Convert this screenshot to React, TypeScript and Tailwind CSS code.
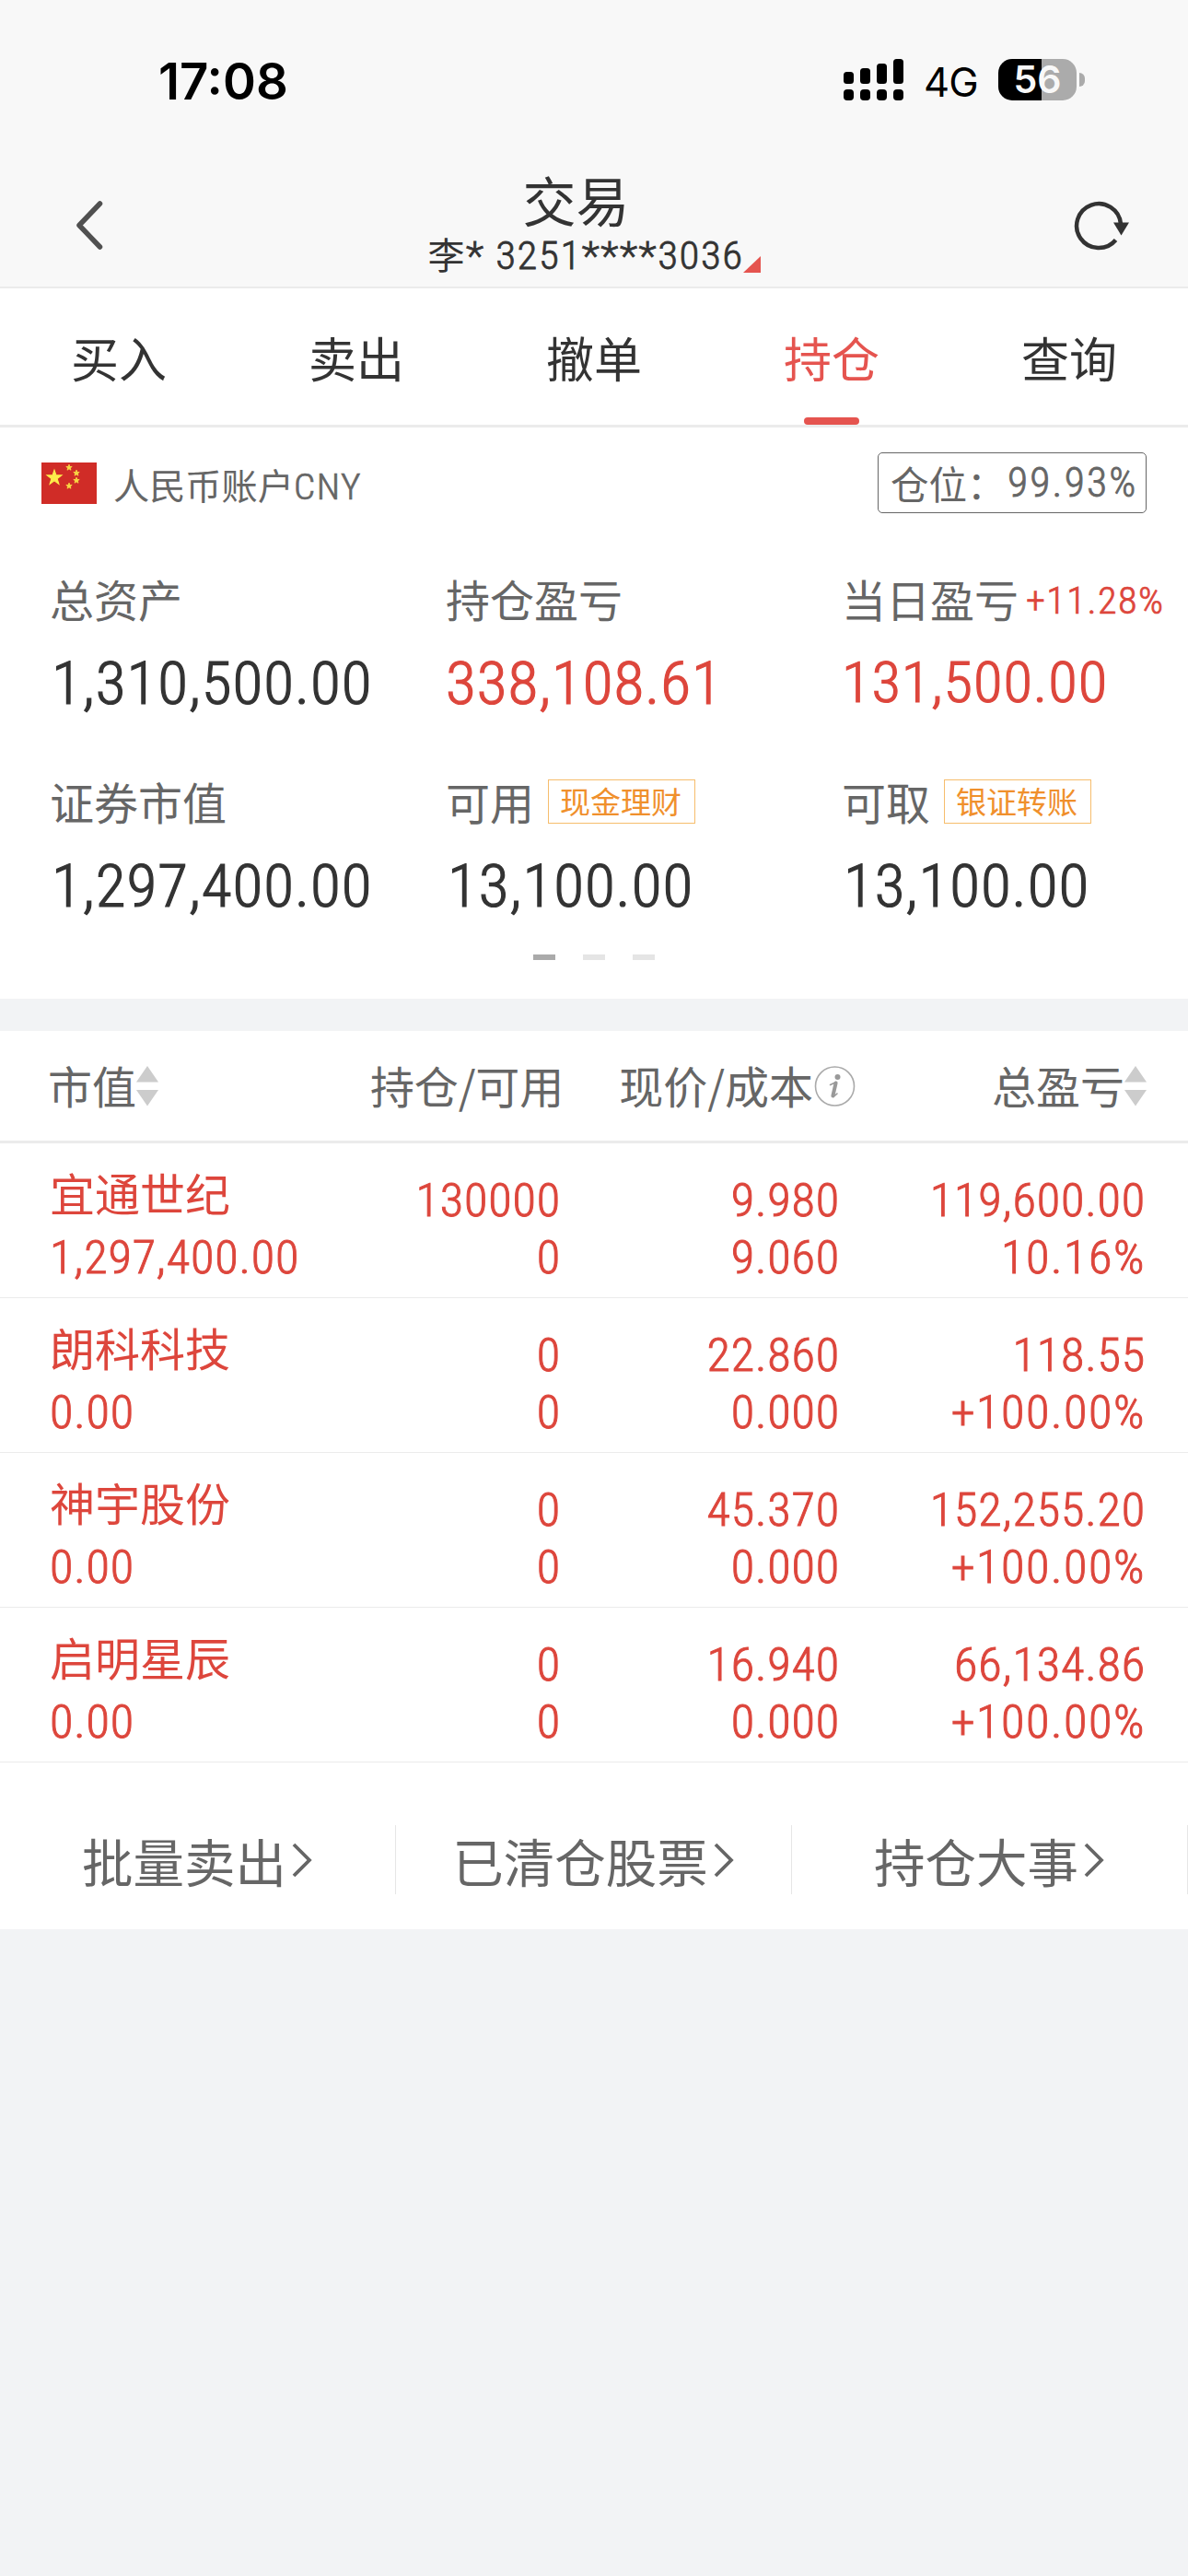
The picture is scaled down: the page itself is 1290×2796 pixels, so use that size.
const CJK = "font-['Noto_Sans_CJK_SC',sans-serif]";
const NUM = "font-['Roboto_Condensed','Noto_Sans_CJK_SC',sans-serif] font-light [-webkit-text-stroke:0.018em] scale-x-[1.045]";

const tabs = ['买入', '卖出', '撤单', '持仓', '查询'];

const holdings = [
  { name: '宜通世纪', value: '1,297,400.00', held: '130000', usable: '0', price: '9.980', cost: '9.060', profit: '119,600.00', rate: '10.16%' },
  { name: '朗科科技', value: '0.00', held: '0', usable: '0', price: '22.860', cost: '0.000', profit: '118.55', rate: '+100.00%' },
  { name: '神宇股份', value: '0.00', held: '0', usable: '0', price: '45.370', cost: '0.000', profit: '152,255.20', rate: '+100.00%' },
  { name: '启明星辰', value: '0.00', held: '0', usable: '0', price: '16.940', cost: '0.000', profit: '66,134.86', rate: '+100.00%' },
];

const actions = ['批量卖出', '已清仓股票', '持仓大事'];

function StatusBar() {
  return (
    <div className="flex h-[173px] items-center pl-[172px] pr-[112px] text-black">
      <span className="mt-[2px] font-['Inter',sans-serif] text-[54.5px] font-semibold leading-[64px]">17:08</span>
      <svg className="ml-auto" width="65" height="45" viewBox="0 0 65 45" fill="#000">
        <rect x="0" y="14" width="11" height="13" rx="3.5" />
        <rect x="18" y="10" width="11" height="17" rx="3.5" />
        <rect x="36" y="5" width="11" height="22" rx="3.5" />
        <rect x="54" y="0" width="11" height="27" rx="3.5" />
        <rect x="0" y="33" width="11" height="12" rx="4" />
        <rect x="18" y="33" width="11" height="12" rx="4" />
        <rect x="36" y="33" width="11" height="12" rx="4" />
        <rect x="54" y="33" width="11" height="12" rx="4" />
      </svg>
      <span className="ml-[22px] mt-1 w-[60px] font-['Inter',sans-serif] text-[43.5px] font-normal leading-[52px] tracking-[-0.02em]">4G</span>
      <div className="ml-[21px] flex h-[45px] w-[85px] items-center justify-center rounded-[15px] bg-[linear-gradient(90deg,#000_55%,#ababab_55%)] font-['Inter',sans-serif] text-[41px] font-semibold leading-[45px] text-[#f8f8f8]">
        56
      </div>
      <div className="ml-[3px] h-[15px] w-[6px] rounded-r-full bg-[#ababab]" />
    </div>
  );
}

function TitleBar() {
  return (
    <div className="flex h-[138px] items-start justify-between pl-[79px] pr-[62px]">
      <svg className="mt-[41px]" width="40" height="60" viewBox="0 0 40 60" fill="none" stroke="#505050" strokeWidth="5.5" strokeLinecap="round" strokeLinejoin="round">
        <path d="M29.5 7 7 30.5 29.5 54" />
      </svg>
      <div className="flex flex-col items-center pl-[9px] text-[#333]">
        <div className={`${CJK} mr-[39px] mt-[7px] text-[58px] leading-[72px]`}>交易</div>
        <div className="mt-[3px] flex w-[361px] items-center">
          <span className={`${CJK} w-[41px] text-[40px] leading-[44px] -mt-[4px]`}>李</span>
          <span className={`${NUM} origin-left whitespace-pre text-[43px] leading-[44px] tracking-[0.034em]`}>* 3251****3036</span>
          <svg className="ml-auto mt-[19px]" width="19" height="18" viewBox="0 0 19 18">
            <path d="M19 0V18H0Z" fill="#e5544f" />
          </svg>
        </div>
      </div>
      <svg className="mt-[41px]" width="66" height="60" viewBox="0 0 66 60" fill="none">
        <path d="M49.5 46.5A24 24 0 1 1 55 29" stroke="#333" strokeWidth="4.5" />
        <path d="M47 27.5H64L55.5 41.5Z" fill="#333" />
      </svg>
    </div>
  );
}

function Flag() {
  const star = 'M0-8 1.9-2.5 7.6-2.5 3 1 4.7 6.5 0 3.2-4.7 6.5-3 1-7.6-2.5-1.9-2.5Z';
  return (
    <svg width="60" height="45" viewBox="0 0 60 45">
      <rect width="60" height="45" fill="#d02c27" />
      <path d={star} transform="translate(14 16.5) scale(1.05)" fill="#fdee4b" stroke="#fdee4b" />
      {[[30, 5.5], [38, 11.5], [38, 19.5], [30, 25.5]].map(([x, y]) => (
        <path key={`${x}-${y}`} d={star} transform={`translate(${x} ${y}) scale(.42)`} fill="#f9dc45" stroke="#f9dc45" strokeWidth="2" />
      ))}
    </svg>
  );
}

function SortArrows() {
  return (
    <svg width="24" height="44" viewBox="0 0 24 44" fill="#ccc">
      <path d="M12 0 24 17.5H0Z" />
      <path d="M0 26H24L12 43.5Z" />
    </svg>
  );
}

function Label({ children }: { children: string }) {
  return <span className={`${CJK} text-[48px] leading-[60px] text-[#666]`}>{children}</span>;
}

function Tag({ children }: { children: string }) {
  return (
    <span className={`${CJK} ml-[15px] mt-[2px] h-[48px] w-[160px] border-[1.5px] border-[#f6bd6c] pr-[2px] text-center text-[33px] leading-[44px] text-[#f0902c]`}>
      {children}
    </span>
  );
}

function Amount({ children, className = 'pl-[2px] text-[#333]' }: { children: string; className?: string }) {
  return <div className={`${NUM} mt-[25px] origin-left text-[64.5px] leading-[76px] tracking-[0.014em] ${className}`}>{children}</div>;
}

function Summary() {
  return (
    <section className="h-[620px] bg-white">
      <div className="flex h-[120px] items-center pl-[45px] pr-[45px] text-[#666]">
        <Flag />
        <div className="ml-[18px] mt-[5px] flex items-baseline leading-[48px]">
          <span className={`${CJK} text-[39.2px]`}>人民币账户</span>
          <span className={`${NUM} origin-left text-[39.4px] tracking-[0.036em]`}>CNY</span>
        </div>
        <div className="ml-auto flex h-[66px] w-[292px] items-center rounded-[5px] border-[1.5px] border-[#666] pl-[13px]">
          <span className={`${CJK} w-[127px] text-[41.5px] leading-[52px] -mt-[1px] whitespace-nowrap`}>仓位：</span>
          <span className={`${NUM} mt-[2px] origin-left text-[43.5px] leading-[52px] tracking-[0.048em]`}>99.93%</span>
        </div>
      </div>
      <div className="grid grid-cols-[430px_430px_1fr] gap-y-[59px] whitespace-nowrap pl-[54px] pt-[35px]">
        <div>
          <div className="flex h-[60px] items-center"><Label>总资产</Label></div>
          <Amount>1,310,500.00</Amount>
        </div>
        <div>
          <div className="flex h-[60px] items-center"><Label>持仓盈亏</Label></div>
          <Amount className="text-[#dd463c]">338,108.61</Amount>
        </div>
        <div>
          <div className="flex h-[60px] items-center">
            <Label>当日盈亏</Label>
            <span className={`${NUM} ml-[8px] mt-[5px] origin-left text-[40.5px] leading-[60px] tracking-[0.034em] text-[#dd463c]`}>+11.28%</span>
          </div>
          <div className={`${NUM} mt-[24px] origin-left text-[62px] leading-[76px] tracking-[0.014em] text-[#dd463c]`}>131,500.00</div>
        </div>
        <div>
          <div className="flex h-[60px] items-center"><Label>证券市值</Label></div>
          <Amount>1,297,400.00</Amount>
        </div>
        <div>
          <div className="flex h-[60px] items-center"><Label>可用</Label><Tag>现金理财</Tag></div>
          <Amount>13,100.00</Amount>
        </div>
        <div>
          <div className="flex h-[60px] items-center"><Label>可取</Label><Tag>银证转账</Tag></div>
          <Amount>13,100.00</Amount>
        </div>
      </div>
      <div className="mt-[36px] flex justify-center gap-[30px]">
        <i className="h-[6px] w-[24px] bg-[#aaa]" />
        <i className="h-[6px] w-[24px] bg-[#e5e5e5]" />
        <i className="h-[6px] w-[24px] bg-[#e5e5e5]" />
      </div>
    </section>
  );
}

const COLS = 'grid grid-cols-[350px_205px_303px_332px]';

function TableHeader() {
  return (
    <div className={`${COLS} h-[122px] whitespace-nowrap border-b-[3px] border-[#ebebeb] pl-[53px] pt-[27px]`}>
      <div className="flex h-[66px] items-center">
        <span className="-ml-[1px] -mt-[4px]"><Label>市值</Label></span>
        <SortArrows />
      </div>
      <div className="-mr-[4px] -mt-[2px] flex h-[66px] items-center justify-end tracking-[-0.01em]"><Label>持仓/可用</Label></div>
      <div className="-mr-[18px] flex h-[66px] items-center justify-end">
        <span className="-mt-[4px] mr-[1px]"><Label>现价/成本</Label></span>
        <svg width="45" height="44" viewBox="0 0 45 44">
          <circle cx="22.5" cy="22" r="21" fill="none" stroke="#aaa" strokeWidth="1.6" />
          <circle cx="25.5" cy="12" r="3" fill="#999" />
          <path d="M17.5 20.5 24 17.5 20.3 31.5Q20 35 25 30" fill="none" stroke="#999" strokeWidth="1.6" strokeLinejoin="round" strokeLinecap="round" />
          <path d="M23.6 18.5 20.4 32.5" stroke="#999" strokeWidth="4" strokeLinecap="round" />
        </svg>
      </div>
      <div className="-mr-[2px] flex h-[66px] items-center justify-end">
        <span className="-mt-[4px]"><Label>总盈亏</Label></span>
        <SortArrows />
      </div>
    </div>
  );
}

function Pair({ top, bottom }: { top: string; bottom: string }) {
  return (
    <div className={`${NUM} origin-right text-right`}>
      <div>{top}</div>
      <div className={bottom.endsWith('%') ? 'tracking-[0.03em]' : ''}>{bottom}</div>
    </div>
  );
}

export default function App() {
  return (
    <div className="flex h-[2796px] w-[1290px] flex-col overflow-hidden bg-[#f2f3f5]">
      <header className="h-[313px] border-b-2 border-[#ebebeb] bg-[#f8f8f8]">
        <StatusBar />
        <TitleBar />
      </header>

      <nav className="grid h-[151px] grid-cols-5 border-b-[3px] border-[#ebebeb] bg-white">
        {tabs.map((t) => (
          <div key={t} className={`${CJK} flex flex-col items-center justify-between text-[52px] ${t === '持仓' ? 'text-[#e5544f]' : 'text-[#333]'}`}>
            <span className="mt-[39px] leading-[72px]">{t}</span>
            {t === '持仓' && <i className="h-[8px] w-[60px] rounded-[4px] bg-[#e5544f]" />}
          </div>
        ))}
      </nav>

      <Summary />

      <section className="mt-[35px] h-[975px] bg-white">
        <TableHeader />
        {holdings.map((h) => (
          <div key={h.name} className={`${COLS} h-[168px] border-b border-[#ebebeb] pl-[54px] pt-[31px] text-[50px] leading-[62px] tracking-[0.016em] text-[#dd463c]`}>
            <div>
              <div className={`${CJK} -mt-[9px] mb-[9px] text-[49px] tracking-normal`}>{h.name}</div>
              <div className={`${NUM} origin-left`}>{h.value}</div>
            </div>
            <Pair top={h.held} bottom={h.usable} />
            <Pair top={h.price} bottom={h.cost} />
            <Pair top={h.profit} bottom={h.rate} />
          </div>
        ))}
        <div className="grid grid-cols-3 pt-[68px]">
          {actions.map((a) => (
            <div key={a} className="flex h-[75px] items-center justify-center border-r border-[#e6e6e6] text-[#666]">
              <span className={`${CJK} text-[55.5px] leading-[70px]`}>{a}</span>
              <svg className="ml-[5px]" width="24" height="40" viewBox="0 0 24 40" fill="none" stroke="#666" strokeWidth="3.8">
                <path d="M3 3 20 20 3 37" />
              </svg>
            </div>
          ))}
        </div>
      </section>
    </div>
  );
}
